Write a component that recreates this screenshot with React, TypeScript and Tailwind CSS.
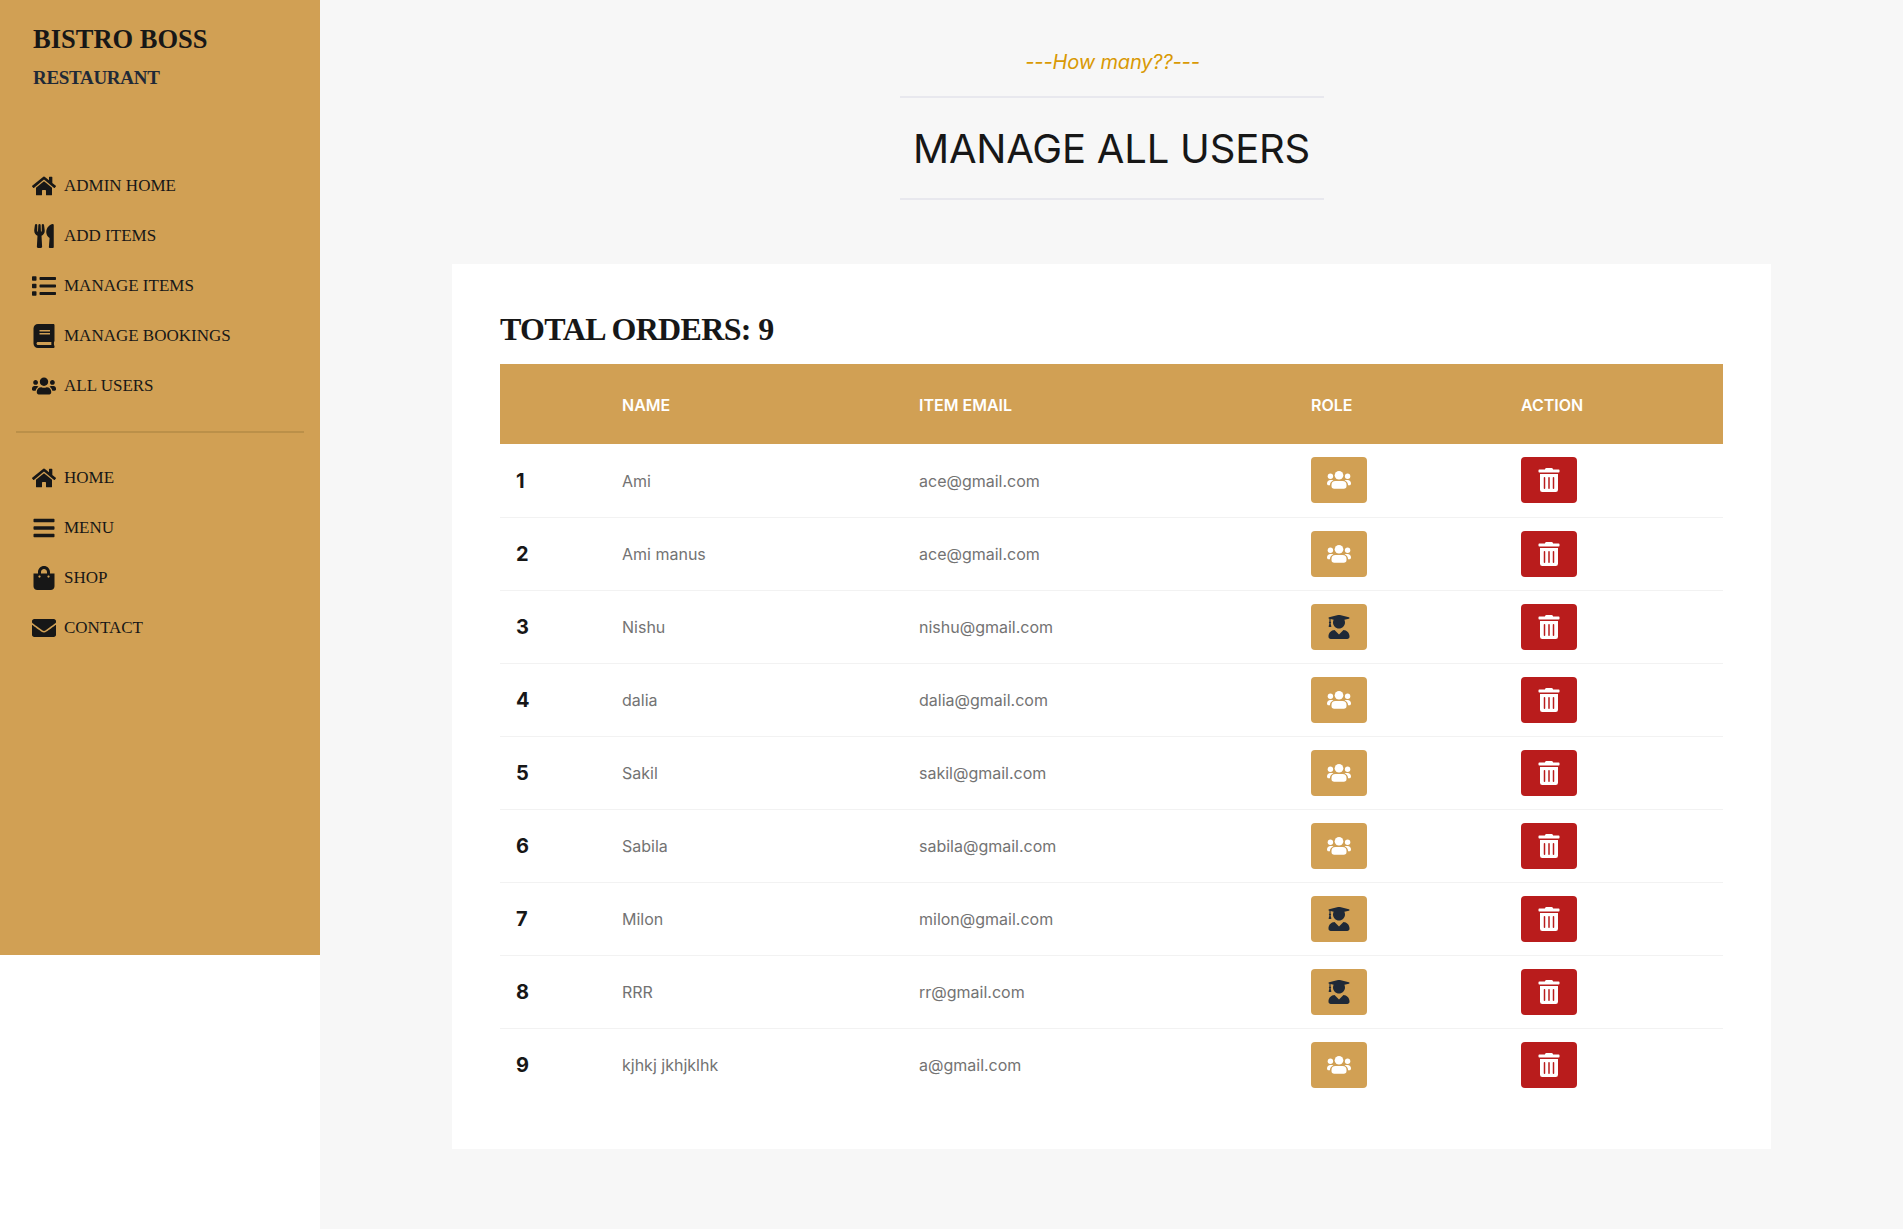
import { FaHome, FaUtensils, FaList, FaBook, FaUsers, FaBars, FaShoppingBag, FaEnvelope, FaUserGraduate, FaTrashAlt } from 'react-icons/fa';

const adminLinks = [
    { label: 'Admin Home', icon: FaHome },
    { label: 'Add Items', icon: FaUtensils },
    { label: 'Manage Items', icon: FaList },
    { label: 'Manage Bookings', icon: FaBook },
    { label: 'All Users', icon: FaUsers },
];

const siteLinks = [
    { label: 'Home', icon: FaHome },
    { label: 'Menu', icon: FaBars },
    { label: 'Shop', icon: FaShoppingBag },
    { label: 'Contact', icon: FaEnvelope },
];

const users = [
    { name: 'Ami', email: 'ace@gmail.com', admin: false },
    { name: 'Ami manus', email: 'ace@gmail.com', admin: false },
    { name: 'Nishu', email: 'nishu@gmail.com', admin: true },
    { name: 'dalia', email: 'dalia@gmail.com', admin: false },
    { name: 'Sakil', email: 'sakil@gmail.com', admin: false },
    { name: 'Sabila', email: 'sabila@gmail.com', admin: false },
    { name: 'Milon', email: 'milon@gmail.com', admin: true },
    { name: 'RRR', email: 'rr@gmail.com', admin: true },
    { name: 'kjhkj jkhjklhk', email: 'a@gmail.com', admin: false },
];

// the three people icon used on the role buttons
const GroupIcon = () => (
    <svg viewBox="0 0 24 18" className="h-[18px] w-6 fill-white">
        <circle cx="12" cy="4.3" r="4.3" />
        <circle cx="3.4" cy="5.2" r="2.7" />
        <circle cx="20.6" cy="5.2" r="2.7" />
        <path d="M8.5 10h7a4 4 0 0 1 4 4v1a2.7 2.7 0 0 1-2.7 2.7H7.2A2.7 2.7 0 0 1 4.5 15v-1a4 4 0 0 1 4-4z" />
        <path d="M0 12.5C0 10.5 1.5 9 3.5 9H5c.5 0 1 .1 1.4.3C4.6 10 3.2 11.6 3 13.5v.8H1.6C.7 14.3 0 13.5 0 12.5z" />
        <path d="M24 12.5C24 10.5 22.5 9 20.5 9H19c-.5 0-1 .1-1.4.3 1.8.7 3.2 2.3 3.4 4.2v.8h1.4c.9 0 1.6-.8 1.6-1.8z" />
    </svg>
);

const NavList = ({ links }: { links: typeof adminLinks }) => (
    <ul className="flex flex-col">
        {links.map((item) => (
            <li key={item.label} className="flex h-[50px] items-center gap-2 px-4 text-[#171717]">
                <item.icon className="h-6 w-6 shrink-0" />
                <span className="font-['Liberation_Serif',serif] text-[17px] uppercase">{item.label}</span>
            </li>
        ))}
    </ul>
);

export default function App() {
    return (
        <div className="flex min-h-[1229px] bg-white font-['Inter',sans-serif]">
            <aside className="h-[955px] w-80 shrink-0 bg-[#d1a054] px-4">
                <div className="flex h-[161px] flex-col pt-[23px] pr-4 pl-[17px] font-['Liberation_Serif',serif] font-bold uppercase">
                    <p className="text-[26.5px] leading-[32px] text-[#171717]">Bistro Boss</p>
                    <p className="mt-[10px] text-[19px] leading-[26px] tracking-[-0.3px] text-[#1f2937]">Restaurant</p>
                </div>
                <NavList links={adminLinks} />
                <div className="mt-5 mb-5 h-[2px] bg-[#bb9049]" />
                <NavList links={siteLinks} />
            </aside>

            <main className="flex-1 bg-[#f7f7f7]">
                <div className="mx-auto flex w-fit flex-col items-center pt-12">
                    <p className="pl-[2px] text-xl leading-[28px] tracking-[-0.15px] text-[#d99904] italic">---How many??---</p>
                    <h2 className="mt-5 w-[424px] border-y-2 border-[#e8e8ee] pt-[27px] pb-[25px] text-center text-[40px] leading-[48px] tracking-[-0.2px] text-[#171717] uppercase">
                        Manage all users
                    </h2>
                </div>

                <section className="mx-auto mt-16 w-[1319px] bg-white px-12 pt-[45px] pb-12">
                    <h3 className="font-['Liberation_Serif',serif] text-[32px] leading-[40px] font-bold tracking-[-0.65px] text-[#171717] uppercase">
                        Total orders: {users.length}
                    </h3>
                    <table className="mt-[15px] w-full table-fixed border-collapse text-left">
                        <thead>
                            <tr className="h-20 bg-[#d1a054] text-white uppercase">
                                <th className="w-[106px]"></th>
                                <th className="w-[297px] pt-px pl-4 text-base font-semibold">Name</th>
                                <th className="w-[392px] pt-px pl-4 text-base font-semibold">Item Email</th>
                                <th className="w-[210px] pt-px pl-4 text-base font-semibold">Role</th>
                                <th className="pt-px pl-4 text-base font-semibold">Action</th>
                            </tr>
                        </thead>
                        <tbody>
                            {users.map((user, index) => (
                                <tr key={index} className="h-[73px] border-b border-[#f2f2f2] last:border-b-0">
                                    <td className="pt-px pl-4 text-xl font-bold text-[#171717]">{index + 1}</td>
                                    <td className="pt-px pl-4 text-base text-[#737373]">{user.name}</td>
                                    <td className="pt-px pl-4 text-base text-[#737373]">{user.email}</td>
                                    <td className="pl-4">
                                        <button className="flex h-[46px] w-14 items-center justify-center rounded-[4px] bg-[#d1a054]">
                                            {user.admin ? <FaUserGraduate className="h-6 w-6 text-[#1f2937]" /> : <GroupIcon />}
                                        </button>
                                    </td>
                                    <td className="pl-4">
                                        <button className="flex h-[46px] w-14 items-center justify-center rounded-[4px] bg-[#b91c1c]">
                                            <FaTrashAlt className="h-6 w-6 text-white" />
                                        </button>
                                    </td>
                                </tr>
                            ))}
                        </tbody>
                    </table>
                </section>
            </main>
        </div>
    );
}
